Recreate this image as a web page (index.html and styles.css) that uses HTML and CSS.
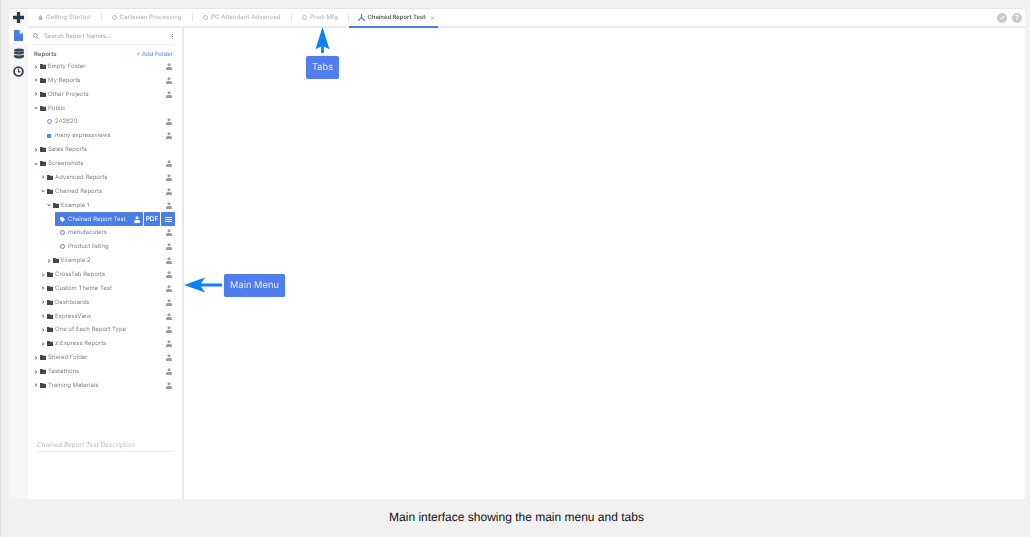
FILE: index.html
```html
<!DOCTYPE html>
<html lang="en">
<head>
    <meta charset="UTF-8">
    <title>Main interface</title>
    <link rel="stylesheet" href="styles.css">
</head>
<body>
    <svg class="defs" width="0" height="0">
        <symbol id="folder" viewBox="0 0 10 8"><path d="M0 0h4l1 1h5v7H0z"/></symbol>
        <symbol id="user" viewBox="0 0 8 9"><circle cx="4" cy="2.2" r="2"/><path d="M0 9V7q0-2 2-2h4q2 0 2 2v2z"/></symbol>
        <symbol id="right" viewBox="0 0 6 6"><path d="M1.5 1 4.5 3 1.5 5" fill="none" stroke="currentColor" stroke-width="1.4"/></symbol>
        <symbol id="down" viewBox="0 0 6 6"><path d="M1 1.5 3 4.5 5 1.5" fill="none" stroke="currentColor" stroke-width="1.4"/></symbol>
    </svg>

    <div class="app">
        <nav class="rail">
            <div class="rail-btn first">
                <svg viewBox="0 0 12 12" width="11" height="11"><path fill="#2e3a4b" d="M4.2 0h3.6v4.2H12v3.6H7.8V12H4.2V7.8H0V4.2h4.2z"/></svg>
            </div>
            <div class="rail-btn active">
                <svg viewBox="0 0 10 12" width="9" height="11"><path fill="#4a7de8" d="M0 0h6l4 4v8H0z"/><path fill="#cfdcf8" d="M6 0l4 4H6z"/></svg>
            </div>
            <div class="rail-btn">
                <svg viewBox="0 0 12 12" width="10" height="11"><g fill="#3a4554"><ellipse cx="6" cy="2" rx="6" ry="2"/><path d="M0 3.4c1 1.4 11 1.4 12 0v2.2c-1 2-11 2-12 0zM0 7.2c1 1.4 11 1.4 12 0v2.6c-1 2.9-11 2.9-12 0z"/></g></svg>
            </div>
            <div class="rail-btn">
                <svg viewBox="0 0 12 12" width="11" height="11"><circle cx="6" cy="6" r="4.8" fill="none" stroke="#3a4554" stroke-width="2"/><path d="M6 3v3.4h2.4" fill="none" stroke="#3a4554" stroke-width="1.2"/></svg>
            </div>
        </nav>

        <div class="main">
            <header class="tabs">
                <div class="tab"><svg class="tab-icon" viewBox="0 0 6 6"><path fill="#b5b9bf" d="M3 0l3 3H5v3H1V3H0z"/></svg>Getting Started</div>
                <div class="tab"><span class="ring"></span>Cartesian Processing</div>
                <div class="tab"><span class="ring"></span>PC Attendant Advanced</div>
                <div class="tab"><span class="ring"></span>Prod-Mfg</div>
                <div class="tab current">
                    <svg class="tab-icon big" viewBox="0 0 8 8"><path fill="none" stroke="#4a7de8" stroke-width="1.4" d="M4 0v4M4 4 1 7M4 4l3 3M0 7h2M6 7h2"/></svg>
                    Chained Report Test<span class="close">×</span>
                </div>
                <div class="tab-tools">
                    <span class="round">
                        <svg viewBox="0 0 8 8" width="7" height="7"><path d="M2 6l4-4" stroke="#fff" stroke-width="1.4"/></svg>
                    </span>
                    <span class="round">?</span>
                </div>
            </header>

            <div class="body">
                <aside class="panel">
                    <div class="search">
                        <svg viewBox="0 0 8 8" width="6" height="6"><circle cx="3.2" cy="3.2" r="2.4" fill="none" stroke="#858a91" stroke-width="1.1"/><path d="M5 5l2.6 2.6" stroke="#858a91" stroke-width="1.1"/></svg>
                        <span class="search-text">Search Report Names...</span>
                        <span class="dots"><i></i><i></i><i></i></span>
                    </div>
                    <div class="reports-head">
                        <b>Reports</b>
                        <span class="add">+ Add Folder</span>
                    </div>

                    <ul class="tree">
                        <li class="row"><svg class="arrow"><use href="#right"/></svg><svg class="folder"><use href="#folder"/></svg><span class="name">Empty Folder</span><svg class="user"><use href="#user"/></svg></li>
                        <li class="row"><svg class="arrow"><use href="#right"/></svg><svg class="folder"><use href="#folder"/></svg><span class="name">My Reports</span><svg class="user"><use href="#user"/></svg></li>
                        <li class="row"><svg class="arrow"><use href="#right"/></svg><svg class="folder"><use href="#folder"/></svg><span class="name">Other Projects</span><svg class="user"><use href="#user"/></svg></li>
                        <li class="row"><svg class="arrow"><use href="#down"/></svg><svg class="folder"><use href="#folder"/></svg><span class="name">Public</span></li>
                        <li class="row leaf-1"><span class="dot"></span><span class="name">242B20</span><svg class="user"><use href="#user"/></svg></li>
                        <li class="row leaf-1"><span class="square"></span><span class="name">many expressviews</span><svg class="user"><use href="#user"/></svg></li>
                        <li class="row"><svg class="arrow"><use href="#right"/></svg><svg class="folder"><use href="#folder"/></svg><span class="name">Sales Reports</span></li>
                        <li class="row"><svg class="arrow"><use href="#down"/></svg><svg class="folder"><use href="#folder"/></svg><span class="name">Screenshots</span><svg class="user"><use href="#user"/></svg></li>
                        <li class="row lvl-1"><svg class="arrow"><use href="#right"/></svg><svg class="folder"><use href="#folder"/></svg><span class="name">Advanced Reports</span><svg class="user"><use href="#user"/></svg></li>
                        <li class="row lvl-1"><svg class="arrow"><use href="#down"/></svg><svg class="folder"><use href="#folder"/></svg><span class="name">Chained Reports</span><svg class="user"><use href="#user"/></svg></li>
                        <li class="row lvl-2"><svg class="arrow"><use href="#down"/></svg><svg class="folder"><use href="#folder"/></svg><span class="name">Example 1</span><svg class="user"><use href="#user"/></svg></li>
                        <li class="row selected">
                            <div class="sel-main">
                                <svg class="sel-tag" viewBox="0 0 8 8"><path fill="#fff" d="M0 0h4l4 4-4 4-4-4z"/></svg>
                                <span class="name">Chained Report Test</span>
                                <svg class="user"><use href="#user"/></svg>
                            </div>
                            <div class="sel-btn">PDF</div>
                            <div class="sel-btn menu"><i></i><i></i><i></i></div>
                        </li>
                        <li class="row leaf-2"><span class="dot"></span><span class="name">manufacuters</span><svg class="user"><use href="#user"/></svg></li>
                        <li class="row leaf-2"><span class="dot"></span><span class="name">Product listing</span><svg class="user"><use href="#user"/></svg></li>
                        <li class="row lvl-2"><svg class="arrow"><use href="#right"/></svg><svg class="folder"><use href="#folder"/></svg><span class="name">Example 2</span><svg class="user"><use href="#user"/></svg></li>
                        <li class="row lvl-1"><svg class="arrow"><use href="#right"/></svg><svg class="folder"><use href="#folder"/></svg><span class="name">CrossTab Reports</span><svg class="user"><use href="#user"/></svg></li>
                        <li class="row lvl-1"><svg class="arrow"><use href="#right"/></svg><svg class="folder"><use href="#folder"/></svg><span class="name">Custom Theme Test</span><svg class="user"><use href="#user"/></svg></li>
                        <li class="row lvl-1"><svg class="arrow"><use href="#right"/></svg><svg class="folder"><use href="#folder"/></svg><span class="name">Dashboards</span><svg class="user"><use href="#user"/></svg></li>
                        <li class="row lvl-1"><svg class="arrow"><use href="#right"/></svg><svg class="folder"><use href="#folder"/></svg><span class="name">ExpressView</span><svg class="user"><use href="#user"/></svg></li>
                        <li class="row lvl-1"><svg class="arrow"><use href="#right"/></svg><svg class="folder"><use href="#folder"/></svg><span class="name">One of Each Report Type</span><svg class="user"><use href="#user"/></svg></li>
                        <li class="row lvl-1"><svg class="arrow"><use href="#right"/></svg><svg class="folder"><use href="#folder"/></svg><span class="name">z.Express Reports</span><svg class="user"><use href="#user"/></svg></li>
                        <li class="row"><svg class="arrow"><use href="#right"/></svg><svg class="folder"><use href="#folder"/></svg><span class="name">Shared Folder</span><svg class="user"><use href="#user"/></svg></li>
                        <li class="row"><svg class="arrow"><use href="#right"/></svg><svg class="folder"><use href="#folder"/></svg><span class="name">Testathons</span><svg class="user"><use href="#user"/></svg></li>
                        <li class="row"><svg class="arrow"><use href="#right"/></svg><svg class="folder"><use href="#folder"/></svg><span class="name">Training Materials</span><svg class="user"><use href="#user"/></svg></li>
                    </ul>

                    <div class="description">Chained Report Test Description</div>
                </aside>
                <main class="content"></main>
            </div>
        </div>

        <!-- callouts drawn over the screen -->
        <div class="callout callout-tabs">Tabs</div>
        <svg class="pointer pointer-tabs" viewBox="0 0 16 28">
            <path fill="#0a84f5" d="M8 0 15.5 24 9.5 21V28H6.5V21L.5 24z"/>
        </svg>
        <div class="callout callout-menu">Main Menu</div>
        <svg class="pointer pointer-menu" viewBox="0 0 38 16">
            <path fill="#0a84f5" d="M0 8 21 .5 17 6.5H38V9.5H17L21 15.5z"/>
        </svg>
    </div>

    <p class="caption">Main interface showing the main menu and tabs</p>
</body>
</html>
```

FILE: styles.css
```css
* {
    box-sizing: border-box;
}
html, body {
    height: 100%;
}
body {
    margin: 0;
    padding: 8px 5px 0 9px;
    background-color: #f1f1f1;
    border-left: 1px solid #dcdcdc;
    font-family: Inter, "Liberation Sans", sans-serif;
    text-rendering: geometricPrecision;
    overflow: hidden;
}
.defs {
    position: absolute;
}
.app {
    position: relative;
    display: flex;
    margin-left: -1px;
    height: 491px;
    border-top: 1px solid #e4e4e4;
    background-color: #fff;
    filter: blur(0.6px);
}
.rail {
    width: 19px;
    background-color: #f6f6f6;
    display: flex;
    flex-direction: column;
}
.rail-btn {
    height: 18px;
    display: flex;
    align-items: center;
    justify-content: center;
}
.rail-btn.first {
    height: 17px;
}
.rail-btn.active {
    background-color: #fff;
}
.main {
    flex: 1;
    display: flex;
    flex-direction: column;
    min-width: 0;
}
.tabs {
    height: 19px;
    display: flex;
    align-items: stretch;
    border-bottom: 2px solid #e9e9e9;
    flex-shrink: 0;
}
.tab {
    display: flex;
    align-items: center;
    gap: 3px;
    font-size: 6.1px;
    font-weight: 500;
    color: #b4b7bb;
    padding: 0 11.5px 0 10px;
    position: relative;
}
.tab:not(.current)::after {
    content: "";
    position: absolute;
    right: 0;
    top: 4px;
    bottom: 4px;
    width: 1px;
    background-color: #e6e6e6;
}
.tab.current {
    color: #555c66;
    font-size: 5.9px;
    font-weight: 600;
    padding: 0 3px 0 9px;
    gap: 2px;
    height: 19px;
    border-bottom: 2px solid #4a7de8;
}
.tab-icon {
    width: 5px;
    height: 5px;
}
.tab-icon.big {
    width: 7px;
    height: 7px;
}
.ring {
    width: 5px;
    height: 5px;
    border: 1px solid #b4b7bb;
    border-radius: 50%;
}
.close {
    color: #bbb;
    font-size: 7px;
    margin-left: 3px;
}
.tab-tools {
    margin-left: auto;
    display: flex;
    align-items: center;
    gap: 5px;
    padding-right: 3px;
}
.round {
    width: 10px;
    height: 10px;
    border-radius: 50%;
    background-color: #c6c8cc;
    color: #fff;
    font-size: 7px;
    font-weight: 700;
    display: flex;
    align-items: center;
    justify-content: center;
}
.body {
    flex: 1;
    display: flex;
    min-height: 0;
}
.panel {
    width: 156px;
    border-right: 2px solid #e8e8e8;
    background-color: #fff;
    display: flex;
    flex-direction: column;
    position: relative;
}
.search {
    height: 17px;
    margin: 0 9px 0 3px;
    padding: 0 0 0 2px;
    display: flex;
    align-items: center;
    gap: 5px;
    border-bottom: 1px solid #f0f0f0;
    font-size: 6px;
    color: #a6a9ae;
    flex-shrink: 0;
}
.dots {
    margin-left: auto;
    display: flex;
    flex-direction: column;
    gap: 1px;
}
.dots i {
    width: 1px;
    height: 1px;
    background-color: #8b8f95;
}
.reports-head {
    height: 12.6px;
    margin-top: 2px;
    padding: 2px 9px 0 6px;
    display: flex;
    align-items: center;
    justify-content: space-between;
    font-size: 6px;
    color: #7b7f86;
    flex-shrink: 0;
}
.reports-head b {
    font-weight: 600;
    color: #6a6e75;
}
.add {
    color: #6e97ee;
    font-weight: 500;
}
.tree {
    list-style: none;
    margin: 0;
    padding: 0;
}
.row {
    height: 13.87px;
    padding: 0 10px 0 6px;
    display: flex;
    align-items: center;
    font-size: 6px;
    color: #80858c;
}
.row.lvl-1 {
    padding-left: 13px;
}
.row.lvl-2 {
    padding-left: 19px;
}
.row.leaf-1 {
    padding-left: 19px;
}
.row.leaf-2 {
    padding-left: 32px;
}
.arrow {
    width: 4px;
    height: 4px;
    color: #6a7078;
    margin-right: 2px;
    flex-shrink: 0;
}
.folder {
    width: 6px;
    height: 5px;
    fill: #3f4753;
    margin-right: 2px;
    flex-shrink: 0;
}
.user {
    width: 6px;
    height: 7px;
    fill: #9a9ea4;
    margin-left: auto;
    flex-shrink: 0;
}
.dot {
    width: 5px;
    height: 5px;
    border: 1.5px solid #5b87ea;
    border-radius: 50%;
    margin-right: 3px;
    flex-shrink: 0;
}
.square {
    width: 4px;
    height: 4px;
    background-color: #5b87ea;
    margin-right: 4px;
}
.row.selected {
    height: 14px;
    padding: 0 7px 0 27px;
    gap: 1px;
}
.sel-main {
    flex: 1;
    height: 14px;
    display: flex;
    align-items: center;
    gap: 3px;
    padding: 0 3px 0 5px;
    background-color: #4a7de8;
    border-radius: 1px;
    color: #e8eefc;
}
.sel-tag {
    width: 5px;
    height: 5px;
}
.sel-main .user {
    fill: #fff;
}
.sel-btn {
    width: 16px;
    height: 14px;
    background-color: #4a7de8;
    border-radius: 1px;
    color: #fff;
    font-size: 6.4px;
    font-weight: 600;
    display: flex;
    align-items: center;
    justify-content: center;
}
.sel-btn.menu {
    width: 14px;
    flex-direction: column;
    gap: 1px;
}
.sel-btn.menu i {
    width: 7px;
    height: 1px;
    background-color: #fff;
}
.description {
    margin: 49px 9px 0 9px;
    padding-bottom: 2px;
    border-bottom: 1px solid #ececec;
    font-size: 6.4px;
    line-height: 8px;
    font-style: italic;
    color: #b9bcc0;
}
.content {
    flex: 1;
    background-color: #fff;
}
.callout {
    position: absolute;
    background-color: #4f7fee;
    color: #e6edfd;
    border-radius: 2px;
    font-size: 9.3px;
    display: flex;
    align-items: center;
    justify-content: center;
    box-shadow: 0 0 1px #8fb0f5;
}
.callout-tabs {
    left: 297px;
    top: 47px;
    width: 33px;
    height: 23px;
}
.callout-menu {
    left: 215px;
    top: 265px;
    width: 61px;
    height: 23px;
}
.pointer {
    position: absolute;
}
.pointer-tabs {
    left: 306px;
    top: 18px;
    width: 15px;
    height: 26px;
}
.pointer-menu {
    left: 175px;
    top: 268px;
    width: 38px;
    height: 16px;
}
.caption {
    margin: 11px 0 0 -2px;
    text-align: center;
    font-family: "Liberation Sans", Arial, sans-serif;
    font-size: 12px;
    color: #111;
}
```
